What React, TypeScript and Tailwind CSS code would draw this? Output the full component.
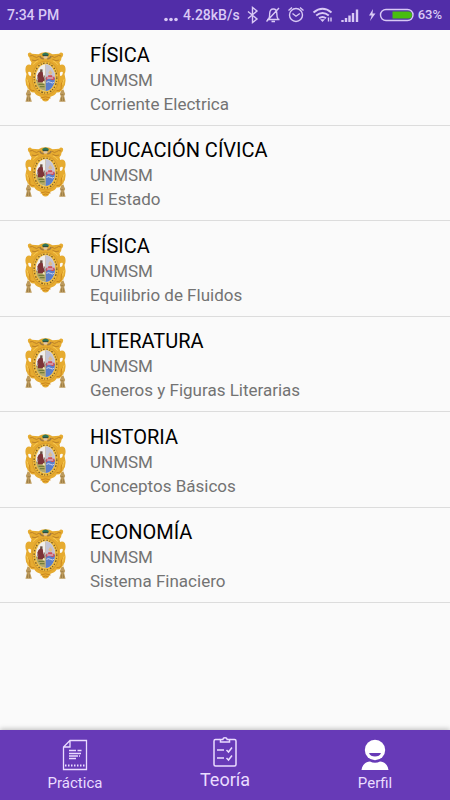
import React from 'react';

const courses = [
  { title: 'FÍSICA', school: 'UNMSM', topic: 'Corriente Electrica' },
  { title: 'EDUCACIÓN CÍVICA', school: 'UNMSM', topic: 'El Estado' },
  { title: 'FÍSICA', school: 'UNMSM', topic: 'Equilibrio de Fluidos' },
  { title: 'LITERATURA', school: 'UNMSM', topic: 'Generos y Figuras Literarias' },
  { title: 'HISTORIA', school: 'UNMSM', topic: 'Conceptos Básicos' },
  { title: 'ECONOMÍA', school: 'UNMSM', topic: 'Sistema Finaciero' },
];

function Crest() {
  return (
    <svg viewBox="0 0 122 150" className="mb-0.5 h-[50px] w-[41px] shrink-0" aria-hidden="true">
      {/* cords and tassels */}
      <path d="M14 96 Q5 104 8 118 M108 96 Q117 104 114 118" fill="none" stroke="#d9c08a" strokeWidth="2" />
      <path d="M7 114h6l5 12-3 6 5 17H1l4-17-3-6zM109 114h6l5 12-3 6 4 17h-19l5-17-3-6z" fill="#bd9a5c" />
      <path d="M7 128h8M107 128h8M7 136v11M13 136v11M109 136v11M115 136v11" stroke="#8f7440" strokeWidth="2" />
      {/* scrolled frame */}
      <path
        d="M9 4 Q15 -1 20 5 L40 7 Q50 0 61 1 Q72 0 82 7 L102 5 Q107 -1 113 4 Q116 12 109 17 Q109 26 103 31 L105 39 Q112 35 119 42 Q124 54 118 66 L121 82 Q122 98 114 108 Q107 123 95 121 Q88 132 76 134 L70 145 Q61 152 52 145 L46 134 Q34 132 27 121 Q15 123 8 108 Q0 98 1 82 L4 66 Q-2 54 3 42 Q10 35 17 39 L19 31 Q13 26 13 17 Q6 12 9 4Z"
        fill="#e6ab30"
      />
      <path d="M14 12q8-4 14 2t14-2M108 12q-8-4-14 2t-14-2M20 24q9 5 20-2M102 24q-9 5-20-2" fill="none" stroke="#bd8228" strokeWidth="3" />
      <path d="M8 86q8 10 6 20t14 10M114 86q-8 10-6 20t-14 10M46 138q15-7 30 0M54 143q7-4 14 0" fill="none" stroke="#cb861e" strokeWidth="3" />
      <path d="M5 82q5 8 4 16M117 82q-5 8-4 16M24 38q6-9 14-11M98 38q-6-9-14-11" fill="none" stroke="#fbcd55" strokeWidth="3" />
      <path d="M9 60q5-2 9 2l-1 10q-8 0-8-12zM113 60q-5-2-9 2l1 10q8 0 8-12z" fill="#fafafa" />
      {/* crowned head */}
      <path d="M44 12q4 9 12 8M78 12q-4 9-12 8" fill="none" stroke="#a07a42" strokeWidth="5" />
      <path d="M51 6q10-9 20 0l-2 6H53z" fill="#2d7558" />
      <path d="M55 11h12v7q-6 5-12 0z" fill="#e2c6a3" />
      <path d="M53 11h16" stroke="#2b4439" strokeWidth="3" />
      {/* legend ring */}
      <ellipse cx="61" cy="78" rx="41" ry="52" fill="#d89a29" />
      <ellipse cx="61" cy="78" rx="38" ry="49" fill="#efbb40" />
      <ellipse cx="61" cy="78" rx="34" ry="45" fill="none" stroke="#7b5b24" strokeWidth="4" strokeDasharray="4 5 3 4 5 6" />
      {/* shield */}
      <ellipse cx="61" cy="77" rx="29" ry="40" fill="#f0eeeb" />
      <path d="M61 37a29 40 0 0 1 29 40H61z" fill="#c3c4d6" />
      <path d="M61 77h29a29 40 0 0 1-29 40z" fill="#5a7ecb" />
      <path d="M32 84h29v33q-24-2-29-33z" fill="#b5aa68" />
      <path d="M46 58l7 3 1 10 5 12-5 8H38l1-14-3-5 4-9z" fill="#7d3438" />
      <path d="M45 52h7v8h-7z" fill="#694f42" />
      <path d="M38 75l-3 10M57 70l3 12" stroke="#5c4640" strokeWidth="2" />
      <path d="M40 97h17M44 104h14" stroke="#737d3b" strokeWidth="4" />
      <path d="M54 87l5 2v6l-7-2z" fill="#f2e7bf" />
      <path d="M69 63l6-10 7 10-6 6z" fill="#dfbc8d" />
      <path d="M63 82v-8h6v-4h12v4h7v8q-6 5-12 0t-13 4z" fill="#cf4d58" />
      <path d="M66 78h18M64 91q6-4 12 0t10 0" fill="none" stroke="#d5dcf0" strokeWidth="3" />
      <path d="M61 37v80" stroke="#b39768" strokeWidth="1" />
    </svg>
  );
}

function StatusIcons() {
  return (
    <svg viewBox="245 0 170 30" className="h-[30px] w-[170px] shrink-0" fill="none" stroke="#d9c9f5" strokeWidth="1.4" aria-hidden="true">
      {/* bluetooth */}
      <path d="M247 11.5l9 7.5-4.5 3.5v-15L256 11l-9 7.5" />
      {/* muted bell */}
      <path d="M266 19.5h12.5M267.5 19c1.3-1.5 1.2-3 1.2-5.500 0-3 1.400-4.500 3.500-4.500s3.600 1.500 3.600 4.500c0 2.500 0 4 1.300 5.500M270.500 21.500h3.500M278 8l-12.500 13.500" />
      {/* alarm */}
      <circle cx="295" cy="15" r="6.500" />
      <path d="M287.500 10.500l3.500-3M302.500 10.500l-3.500-3M291.500 13.500l3.500 2.700 3.800-2.700" />
      {/* wifi */}
      <path d="M312.500 12.500q9-7.500 18 0M315.200 15.500q6.300-5 12.600 0M318 18.300q3.500-2.700 7 0" strokeWidth="2" />
      <path d="M319 19.300h5l-2.500 2.700z" fill="#d9c9f5" stroke="none" />
      <path d="M327.500 17.500v4M330 17.500v4" />
      {/* signal */}
      <path d="M341.500 20v2M345 18v4M348.500 15.500v6.500M352 13v9M356 9.500v12.500" strokeWidth="2.400" />
      {/* charging */}
      <path d="M372 9l-4 6.500h2.700l-1.700 5.500 5.500-7.500h-3z" fill="#d9c9f5" stroke="none" />
      <rect x="379.500" y="9.500" width="32.500" height="11" rx="5.500" />
      <path d="M391.500 11.500h16a3.500 3.500 0 0 1 0 7h-16z" fill="#48bd10" stroke="none" />
    </svg>
  );
}

function PracticeIcon() {
  return (
    <svg viewBox="0 0 26 32" className="h-8 w-[26px]" fill="none" stroke="#eadcff" strokeWidth="1.300" aria-hidden="true">
      <path d="M8 1.500h16.500v29h-23V8zM8 1.500V8H1.500" />
      <path d="M7 11.500h7m1.500 0h4M7 14.500h12M7 17h9m1 0h1M7 19.500h7" />
      <path d="M3 26.500h20" strokeWidth="2" strokeDasharray="1.500 1.500" />
    </svg>
  );
}

function TheoryIcon() {
  return (
    <svg viewBox="0 0 26 32" className="h-8 w-[26px]" fill="none" stroke="#eadcff" strokeWidth="1.500" aria-hidden="true">
      <path d="M8 3.500H3.500a1.500 1.500 0 0 0-1.500 1.500v23.500a1.500 1.500 0 0 0 1.500 1.500h19a1.500 1.500 0 0 0 1.500-1.500V5a1.500 1.500 0 0 0-1.500-1.500H18" />
      <path d="M8.500 6V3.500h2.300c.4-2.300 4-2.300 4.400 0h2.300V6zM5 14h7M5 22h7M14.500 14l2 2 3.500-4.500M14.500 22l2 2 3.500-4.500" />
    </svg>
  );
}

function ProfileIcon() {
  return (
    <svg viewBox="0 0 28 32" className="h-8 w-7" fill="#ffffff" aria-hidden="true">
      <circle cx="14" cy="11" r="10.200" />
      <path d="M.5 31c.6-5 4-8.500 8.500-8.500 3 1.700 7 1.700 10 0 4.500 0 7.900 3.500 8.500 8.500z" />
      <path d="M8 14h12c-1.200 4.800-10.800 4.800-12 0z" fill="#673ab7" />
    </svg>
  );
}

export default function App() {
  return (
    <div className="flex min-h-screen flex-col bg-[#fafafa] font-[Roboto,sans-serif]">
      <header className="flex h-[30px] items-center justify-between bg-[#512da8] pl-[7px] pr-2 text-sm font-medium text-[#d9c9f5]">
        <span>7:34 PM</span>
        <div className="flex items-center">
          <svg viewBox="0 0 16 30" className="mr-1 h-[30px] w-4" fill="#d9c9f5" aria-hidden="true">
            <circle cx="3" cy="19.500" r="1.800" />
            <circle cx="8" cy="19.500" r="1.800" />
            <circle cx="13" cy="19.500" r="1.800" />
          </svg>
          <span className="mr-1.5">4.28kB/s</span>
          <StatusIcons />
          <span className="ml-0.5 text-[13px]">63%</span>
        </div>
      </header>

      <main className="flex-1">
        <ul>
          {courses.map((course, index) => (
            <li
              key={index}
              className="flex items-center gap-6 border-b border-[#dcdcdc] pl-[25px] odd:h-24 even:h-[95px]"
            >
              <Crest />
              <div className="pt-0.5">
                <h2 className="text-xl leading-[26px] text-black">{course.title}</h2>
                <p className="text-[17px] leading-6 text-[#737373]">{course.school}</p>
                <p className="text-[17px] leading-6 text-[#737373]">{course.topic}</p>
              </div>
            </li>
          ))}
        </ul>
      </main>

      <nav className="sticky bottom-0 grid h-[70px] grid-cols-3 bg-[#673ab7] text-[#eadcff] shadow-[0_-1px_5px_rgba(0,0,0,0.25)]">
        <button type="button" className="flex flex-col items-center pt-[9px]">
          <PracticeIcon />
          <span className="text-[15px] leading-6">Práctica</span>
        </button>
        <button type="button" aria-current="page" className="flex flex-col items-center pt-1.5">
          <TheoryIcon />
          <span className="text-lg leading-6">Teoría</span>
        </button>
        <button type="button" className="flex flex-col items-center pt-[9px]">
          <ProfileIcon />
          <span className="text-[15px] leading-6">Perfil</span>
        </button>
      </nav>
    </div>
  );
}
